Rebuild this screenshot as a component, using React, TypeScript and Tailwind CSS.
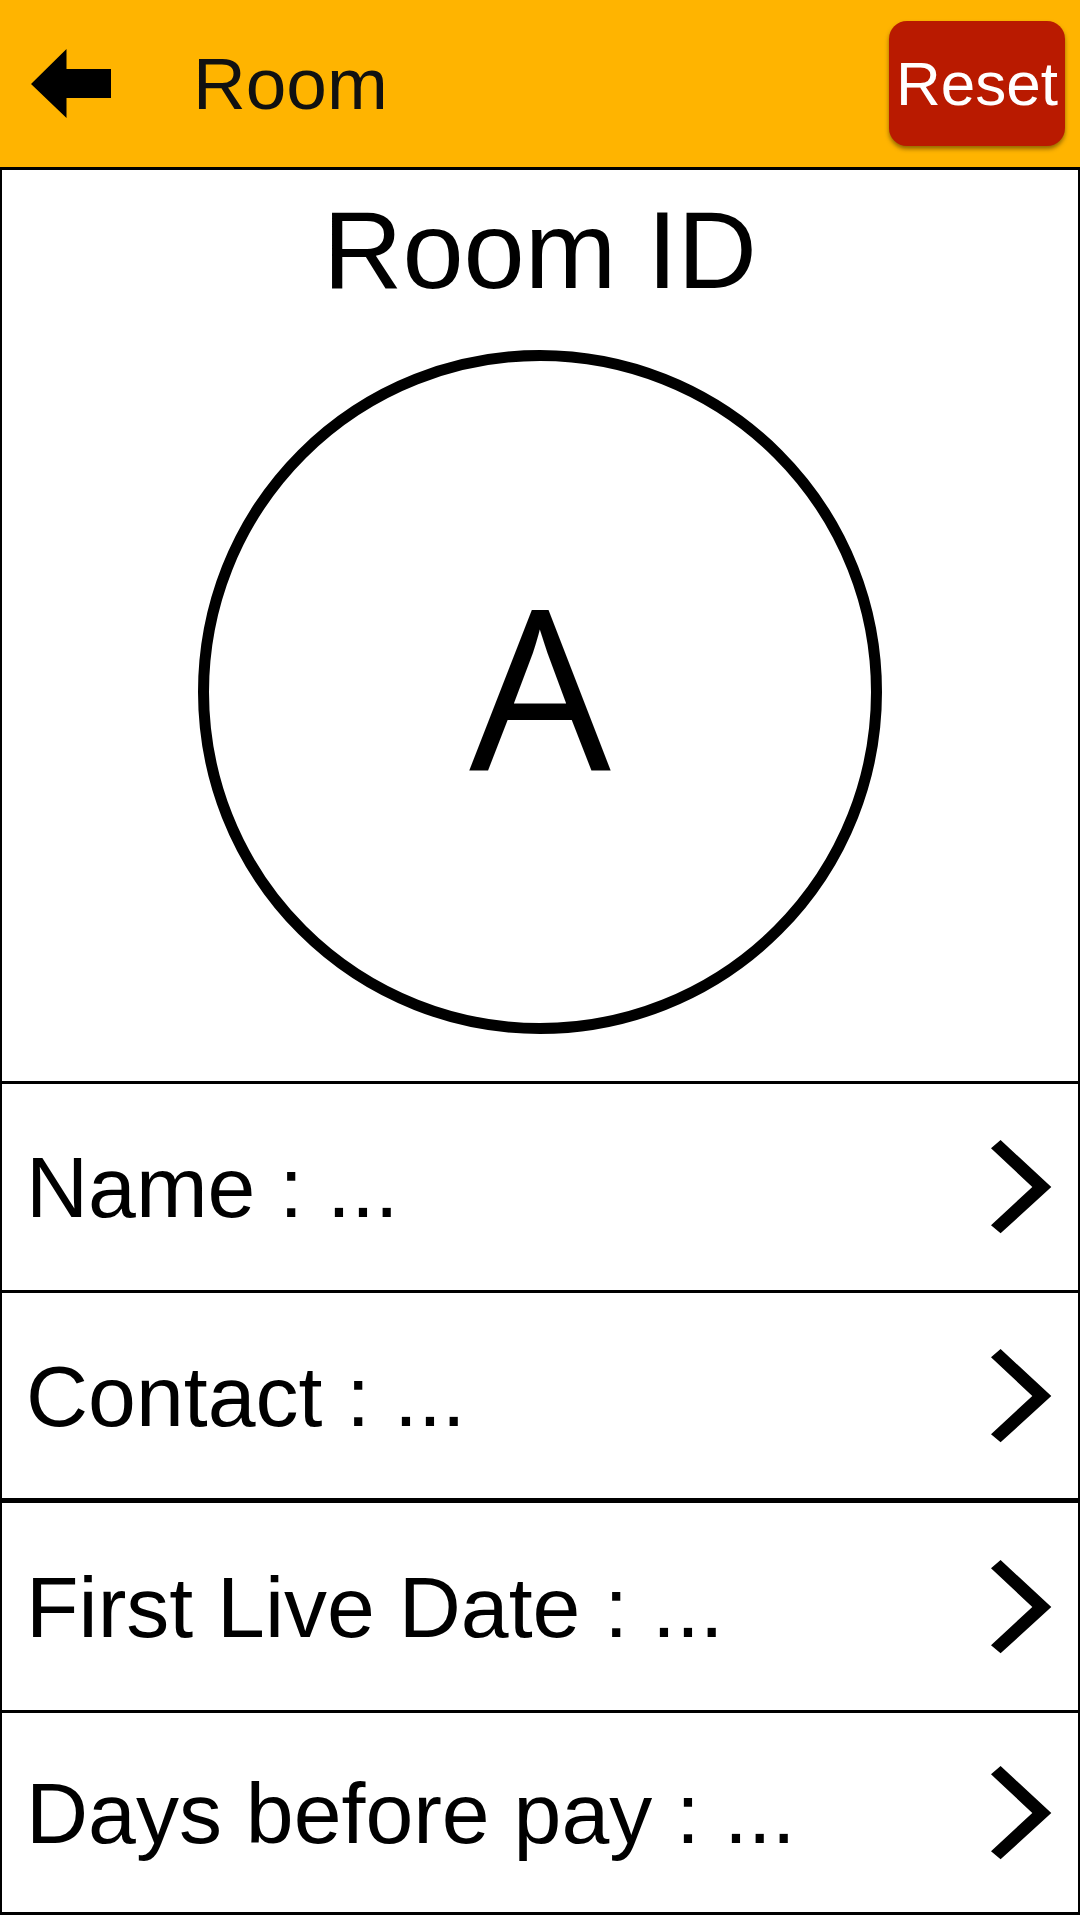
import React from "react";

function Chevron() {
  return (
    <svg width="61" height="94" viewBox="0 0 61 94" className="shrink-0">
      <polygon points="9.6,0 60.3,47 9.6,93.3 0,85.3 41.3,47 0,8.3" fill="#000" />
    </svg>
  );
}

function Row({ label, h, bb }: { label: string; h: string; bb: string }) {
  return (
    <div className={`flex items-center justify-between border-x-2 border-black pl-[24px] pr-[26px] ${h} ${bb}`}>
      <span className="text-[86px] leading-none text-black">{label}</span>
      <Chevron />
    </div>
  );
}

export default function App() {
  return (
    <div className="w-[1080px] h-[1921px] bg-white font-['Liberation_Sans',Arial,sans-serif] overflow-hidden">
      <header className="h-[170px] bg-[#ffb400] border-b-[3px] border-black flex items-center pl-[31px] pr-[15px]">
        <svg width="80" height="69" viewBox="0 0 80 69" className="shrink-0">
          <polygon points="0,35 35.5,0 35.5,20 80,20 80,49 35.5,49 35.5,69" fill="#000" />
        </svg>
        <span className="ml-[82px] text-[73px] leading-none text-[#111]">Room</span>
        <button className="ml-auto w-[176px] h-[125px] rounded-[18px] bg-[#b91a00] text-white text-[62px] leading-none flex items-center justify-center shadow-[0_3px_4px_rgba(60,40,0,0.55)]">
          Reset
        </button>
      </header>
      <section className="h-[914px] border-x-2 border-b-[3px] border-black flex flex-col items-center pt-[25px]">
        <div className="text-[110px] leading-none text-black">Room ID</div>
        <div className="mt-[45px] w-[684px] h-[684px] rounded-full border-[11px] border-black flex items-center justify-center">
          <span className="font-['Open_Sans',sans-serif] font-medium text-[224px] leading-none text-black mb-[14px]">A</span>
        </div>
      </section>
      <Row label="Name : ..." h="h-[209px]" bb="border-b-[3px]" />
      <Row label="Contact : ..." h="h-[210px]" bb="border-b-[5px]" />
      <Row label="First Live Date : ..." h="h-[210px]" bb="border-b-[3px]" />
      <Row label="Days before pay : ..." h="h-[202px]" bb="border-b-[3px]" />
    </div>
  );
}
